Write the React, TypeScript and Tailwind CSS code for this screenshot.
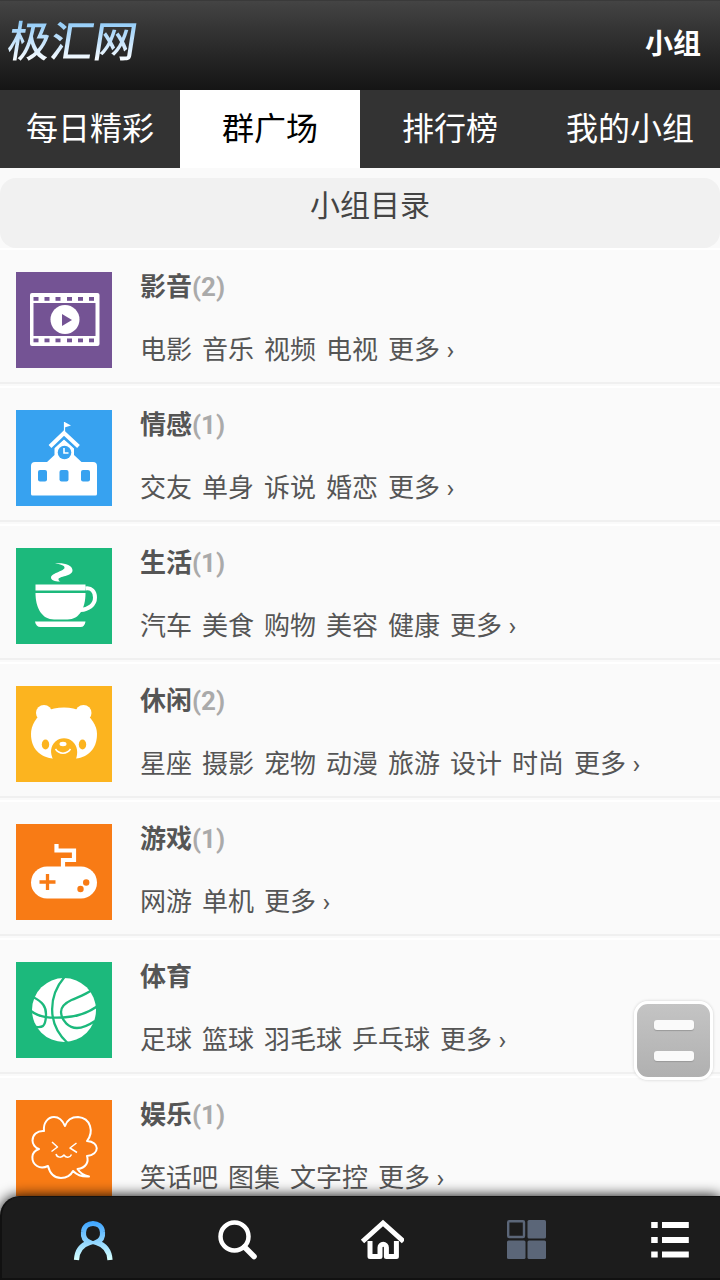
import type { ReactNode } from 'react'

const tabs = ['每日精彩', '群广场', '排行榜', '我的小组']
const activeTab = 1

type Category = {
  title: string
  count?: number
  color: string
  links: string[]
  icon: ReactNode
}

const categories: Category[] = [
  {
    title: '影音',
    count: 2,
    color: 'bg-[#745394]',
    links: ['电影', '音乐', '视频', '电视'],
    icon: (
      <>
        <rect x="14" y="21" width="69.500" height="53" rx="2" fill="#fff" />
        <rect x="17.500" y="31" width="62" height="33" fill="#745394" />
        <g fill="#745394">
          {[17.5, 28.5, 39.5, 51, 62, 73].map((x) => (
            <g key={x}>
              <rect x={x} y="25" width="5" height="3.800" />
              <rect x={x} y="66.500" width="5" height="3.800" />
            </g>
          ))}
        </g>
        <circle cx="49" cy="47.500" r="14.500" fill="#fff" />
        <path d="M46 42v12l10-6z" fill="#745394" />
      </>
    ),
  },
  {
    title: '情感',
    count: 1,
    color: 'bg-[#37a2f0]',
    links: ['交友', '单身', '诉说', '婚恋'],
    icon: (
      <>
        <path
          d="M48 29.500 38.500 38v7L31 52H19a4 4 0 0 0-4 4v28a1.500 1.500 0 0 0 1.500 1.500h63A1.500 1.500 0 0 0 81 84V56a4 4 0 0 0-4-4H65.500L58 45v-7z"
          fill="#fff"
        />
        <path d="M34 36.500 48 23l14.500 13.500" fill="none" stroke="#fff" strokeWidth="4" />
        <path d="M36.500 39 48 28l11.500 11" fill="none" stroke="#37a2f0" strokeWidth="1.300" />
        <path d="M48.500 22V12" stroke="#fff" strokeWidth="1.200" />
        <path d="m48.500 12 6.500 3.500-6.500 2z" fill="#fff" />
        <circle cx="48.500" cy="42.500" r="6.800" fill="#37a2f0" />
        <path d="M48 38v5h4.500" fill="none" stroke="#fff" strokeWidth="1.600" />
        <g fill="#37a2f0">
          <rect x="22" y="60" width="9" height="11.500" rx="2" />
          <rect x="43.500" y="60" width="9" height="11.500" rx="2" />
          <rect x="65" y="60" width="9" height="11.500" rx="2" />
        </g>
      </>
    ),
  },
  {
    title: '生活',
    count: 1,
    color: 'bg-[#1cb97c]',
    links: ['汽车', '美食', '购物', '美容', '健康'],
    icon: (
      <>
        <g fill="#fff">
          <path d="M39 15.500c9-1 17 1.500 17.500 6.500.5 6.500-14.500 6-14 9.500.1 1 1 1.600 2 2-5 .2-9.500-1-9.500-4 0-4.500 14-6.500 13.500-10 0-2-4.500-3.500-9.500-4z" />
          <path d="M19.500 36.500h50v6h-50z" />
          <path d="M19.500 45h50c0 15-6 26.500-18 26.500H38c-12 0-18.500-11.500-18.500-26.500z" />
          <path d="M19 73.500h50.500c-.5 3.500-2 5.500-5 5.500H24.500c-3 0-5-2-5.500-5.500z" />
        </g>
        <path
          d="M69.500 40.500c6-1 9.500 3 9.500 9 0 7.500-6.500 12-14.500 12.500"
          fill="none"
          stroke="#fff"
          strokeWidth="4"
        />
      </>
    ),
  },
  {
    title: '休闲',
    count: 2,
    color: 'bg-[#fcb41f]',
    links: ['星座', '摄影', '宠物', '动漫', '旅游', '设计', '时尚'],
    icon: (
      <>
        <g fill="#fff">
          <circle cx="28" cy="27" r="8" />
          <circle cx="67.500" cy="27" r="8" />
          <path d="M48 21.500c7 0 12 1.500 18 4 9 5 15 14 15 22.500 0 15-9 23-21 24.500H37C24 71 15 63 15 48c0-8.500 5-17.500 14-22.500 6-2.500 12-4 19-4z" />
        </g>
        <g fill="#fcb41f">
          <path d="M37.500 74c-4-7-3-14 2-18.500a13 13 0 0 1 17 0c5 4.500 6 11.500 3 18.500z" />
          <ellipse cx="29.500" cy="58.500" rx="3.700" ry="5" />
          <ellipse cx="66.500" cy="58.500" rx="3.700" ry="5" />
        </g>
        <ellipse cx="47" cy="58" rx="3.500" ry="2.200" fill="#fff" />
        <path d="M39.500 63c3.500 5.500 11.500 5.500 15 0" fill="none" stroke="#fff" strokeWidth="1.500" />
      </>
    ),
  },
  {
    title: '游戏',
    count: 1,
    color: 'bg-[#f87b15]',
    links: ['网游', '单机'],
    icon: (
      <>
        <rect x="15" y="42.500" width="66" height="32" rx="16" fill="#fff" />
        <path d="M40.500 20v6.500h17.500V36H47v8" fill="none" stroke="#fff" strokeWidth="4.200" />
        <path d="M31.500 50v16M23.500 58h16" stroke="#f87b15" strokeWidth="3.300" />
        <circle cx="70.200" cy="58.500" r="3.200" fill="#f87b15" />
        <circle cx="64.500" cy="65" r="3.200" fill="#f87b15" />
      </>
    ),
  },
  {
    title: '体育',
    color: 'bg-[#1cb97c]',
    links: ['足球', '篮球', '羽毛球', '乒乓球'],
    icon: (
      <>
        <circle cx="48" cy="48" r="32" fill="#fff" />
        <g fill="none" stroke="#1cb97c" strokeWidth="2.300">
          <path d="M48.500 15C33 33 30 61 51.500 81" />
          <path d="M15 49c9 7 20 7 32 6.500 14-.5 24-4 34-11" />
          <path d="M17 35c10 5 13 10 13 17 0 6-1 10-3 12-2 1.500-4 1-7 1" />
          <path d="M76 28c-7 5-14 7-20.500 10C48 41.500 45 45 45 50c.5 9 8 16 16 16 7 0 12-3 18-7" />
        </g>
      </>
    ),
  },
  {
    title: '娱乐',
    count: 1,
    color: 'bg-[#f87b15]',
    links: ['笑话吧', '图集', '文字控'],
    icon: (
      <g fill="none" stroke="#fff" strokeWidth="2" strokeLinejoin="round">
        <path d="M49 26C46 19 42 17 38 17c-6 0-11 6-10 14-7-.5-11.500 4-11.500 9.500C16.500 44 19 48 23 49c-9 3-8 13-2 17 3 2 7 2 11 0 2 8 7 12 13 12 6-.3 10-3 12-7 4 4 9 6 16 5.500-5-1-9-3.500-11.500-7.500C70 68 73 62 71 56c13-1 13-14.500 0-15 7-9 4-23-9-24-6 0-11 3-13 9z" />
        <path d="m36 42 5.500 5-6 4.500M60.500 43 54 48l7 4.500" strokeWidth="1.500" />
        <path d="M40 54c1 4 6 4 8 1 2 3 6 3 7.500-.5" strokeWidth="1.500" />
      </g>
    ),
  },
]

function Header() {
  return (
    <header className="flex h-[90px] items-start justify-between border-t border-[#3a3a3a] bg-gradient-to-b from-[#444] to-[#151515] pr-[19px] pl-2">
      <h1 className="mt-[11px] -skew-x-[9deg] bg-gradient-to-b from-[#8fcbf8] from-15% via-[#c6e4fc] via-50% to-white to-85% bg-clip-text pr-1 text-[43px] leading-[60px] font-medium text-transparent">
        极汇网
      </h1>
      <span className="mt-6 text-[28px] leading-[40px] font-bold text-white">小组</span>
    </header>
  )
}

function TabBar() {
  return (
    <nav className="grid h-[78px] grid-cols-4 bg-[#333] text-[32px] leading-[78px] text-white">
      {tabs.map((tab, index) => (
        <a
          key={tab}
          className={index === activeTab ? 'bg-white text-center text-black' : 'text-center'}
        >
          {tab}
        </a>
      ))}
    </nav>
  )
}

function CategoryRow({ category }: { category: Category }) {
  return (
    <li className="mb-0.5 flex h-[136px] shrink-0 border-t-2 border-b-2 border-t-white border-b-[#f0f0f0] pt-[22px] pl-4">
      <svg viewBox="0 0 96 96" className={`h-24 w-24 shrink-0 ${category.color}`}>
        {category.icon}
      </svg>
      <div className="ml-7 text-[26px] whitespace-nowrap text-[#555]">
        <h2 className="-mt-1 leading-[38px] font-bold">
          {category.title}
          {category.count && <span className="text-[#aaa]">({category.count})</span>}
        </h2>
        <div className="mt-[25px] flex gap-[10px] leading-[38px]">
          {category.links.map((link) => (
            <a key={link}>{link}</a>
          ))}
          <a>更多 ›</a>
        </div>
      </div>
    </li>
  )
}

function FloatingMenu() {
  return (
    <button className="absolute top-[1001px] left-[634px] flex h-[79px] w-[79px] flex-col items-center gap-[21px] rounded-[14px] border-[3px] border-white bg-gradient-to-b from-[#c4c4c4] to-[#b0b0b0] pt-4 shadow-[0_0_3px_#ccc]">
      <span className="h-[10px] w-10 shrink-0 rounded-[3px] bg-[#fafafa] shadow-[0_1px_1px_#999]" />
      <span className="h-[10px] w-10 shrink-0 rounded-[3px] bg-[#fafafa] shadow-[0_1px_1px_#999]" />
    </button>
  )
}

function BottomBar() {
  return (
    <nav className="absolute inset-x-0 bottom-0 flex h-[84px] items-start justify-between rounded-tl-[20px] border-t border-b-2 border-l-2 border-[#111] bg-[#1c1c1c] pt-[22px] pr-[29px] pl-[70px] shadow-[0_0_14px_#000]">
      <svg width="42" height="42" viewBox="0 0 42 42" fill="none">
        <defs>
          <linearGradient id="user" x1="0" y1="3" x2="0" y2="40" gradientUnits="userSpaceOnUse">
            <stop stopColor="#3fa5ff" />
            <stop offset="1" stopColor="#d5ffff" />
          </linearGradient>
        </defs>
        <path
          d="M4.500 41C5 32 9 26 17.500 23.500c-4.500-2-6.500-6-6-10.500.5-6 5-8.500 9.500-8.500s9 2.500 9.500 8.500c.5 4.500-1.500 8.500-6 10.500 8.500 2.500 13 8.500 13.500 17.500"
          stroke="url(#user)"
          strokeWidth="5.200"
        />
      </svg>
      <svg width="42" height="42" viewBox="0 0 42 42" fill="none" stroke="#fff">
        <circle cx="18.500" cy="17.500" r="14" strokeWidth="4.500" />
        <path d="m28.500 28 9.500 9.500" strokeWidth="5.500" strokeLinecap="round" />
      </svg>
      <svg width="44" height="42" viewBox="0 0 44 42" fill="none" stroke="#fff">
        <path d="M2.500 22.500 23 4l20.500 18.500" strokeWidth="5" />
        <path
          d="M10 22v15.500h10v-9a3.200 3.200 0 0 1 6.400 0v9h10V22"
          strokeWidth="5"
          strokeLinejoin="round"
        />
      </svg>
      <svg width="42" height="42" viewBox="-1 0 42 42" fill="#5b6678">
        <rect x="2.200" y="2.200" width="15.800" height="15.800" rx="1" fill="none" stroke="#5b6678" strokeWidth="2.400" />
        <rect x="21.500" y="1" width="18.500" height="18.500" rx="1.500" />
        <rect x="1" y="21.500" width="18.500" height="18.500" rx="1.500" />
        <rect x="21.500" y="21.500" width="18.500" height="18.500" rx="1.500" />
      </svg>
      <svg width="42" height="42" viewBox="0 0 42 42" fill="#fff">
        {[3, 18, 32.5].map((y) => (
          <g key={y}>
            <rect x="2.200" y={y} width="6.500" height="6" />
            <rect x="13" y={y} width="26.800" height="6" />
          </g>
        ))}
      </svg>
    </nav>
  )
}

export default function App() {
  return (
    <div className="relative h-[1280px] w-[720px] overflow-hidden bg-[#fafafa] font-[Roboto,'Noto_Sans_CJK_SC',sans-serif]">
      <Header />
      <TabBar />
      <h2 className="mt-[10px] h-[70px] rounded-[16px] bg-[#f1f1f1] pl-5 text-center text-[30px] leading-[56px] text-[#444]">
        小组目录
      </h2>
      <ul className="flex flex-col">
        {categories.map((category) => (
          <CategoryRow key={category.title} category={category} />
        ))}
      </ul>
      <FloatingMenu />
      <BottomBar />
    </div>
  )
}
